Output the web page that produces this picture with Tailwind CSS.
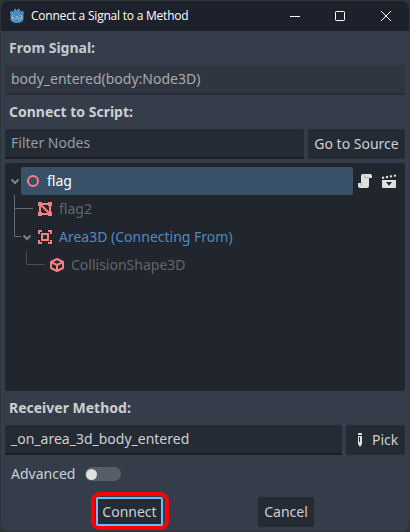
<!DOCTYPE html>
<html lang="en">
<head>
<meta charset="utf-8">
<title>Connect a Signal to a Method</title>
<script src="https://cdn.jsdelivr.net/npm/@tailwindcss/browser@4"></script>
</head>
<body class="w-[410px] h-[532px] overflow-hidden bg-[#303438] p-px font-['Noto_Sans',sans-serif] text-[14px] leading-[20px] text-[#cdcfd2]">
<div class="flex h-[530px] w-[408px] flex-col overflow-hidden rounded-[7px] bg-[#363d4a]">
  <header class="flex h-[30px] shrink-0 items-center bg-[#1d212b] pl-[8px] text-white">
    <svg class="h-4 w-4 shrink-0" viewBox="0 0 16 16"><path fill="#478cbf" d="M.8 4.500 2.700 2.600 4 3.400 5 3V1.200L6.800.6 7.500 2.200h1L9.200.6 11 1.200V3l1 .4 1.300-.8 1.900 1.900-.7 1.500V11c0 2.600-3.100 4-6.500 4s-6.500-1.400-6.500-4V6z"/><path fill="none" stroke="#8fbbdc" stroke-width=".7" d="M1.800 10.200 4 10.500 4.300 12h2l.4-1.200h2.600l.4 1.200h2l.3-1.500 2.200-.3"/><circle cx="4.500" cy="8.300" r="1.600" fill="#dbe3ea"/><circle cx="11.500" cy="8.300" r="1.600" fill="#dbe3ea"/><circle cx="4.700" cy="8.300" r="1" fill="#414042"/><circle cx="11.300" cy="8.300" r="1" fill="#414042"/><path stroke="#dbe3ea" d="M8 8v1.500"/></svg>
    <h1 class="ml-[6px] whitespace-nowrap font-['Open_Sans',sans-serif] text-[12px] tracking-[-0.22px]">Connect a Signal to a Method</h1>
    <div class="ml-auto flex shrink-0 items-center pr-[17px]">
      <svg class="h-3 w-3" viewBox="0 0 12 12" stroke="#fff"><path d="M1 6.500h10"/></svg>
      <svg class="ml-[33px] h-3 w-3" viewBox="0 0 12 12" fill="none" stroke="#fff"><rect x="1.500" y="1.500" width="9" height="9" rx=".8"/></svg>
      <svg class="ml-[34px] h-3 w-3" viewBox="0 0 12 12" stroke="#fff"><path d="m1 1 10 10M11 1 1 11"/></svg>
    </div>
  </header>
  <main class="flex flex-1 flex-col px-1">
    <h2 class="flex h-[34px] items-center pl-1 font-bold text-[#c6c9cd]">From Signal:</h2>
    <div class="h-[30px] rounded-t-[2px] border-b-2 border-[#272c36] bg-[#303641] px-[6px] pt-[4px] text-[#a6a9ae]">body_entered(body:Node3D)</div>
    <h2 class="flex h-[34px] items-center pl-1 font-bold">Connect to Script:</h2>
    <div class="flex h-[30px] gap-1">
      <div class="w-[299px] rounded-t-[2px] border-b-2 border-[#1b1f26] bg-[#252b34] px-[6px] pt-[4px] text-[#989b9f]">Filter Nodes</div>
      <button class="flex w-[97px] items-center justify-center rounded-[2px] bg-[#252b34] whitespace-nowrap">Go to Source</button>
    </div>
    <div class="mt-1 h-[228px] rounded-[2px] bg-[#21252e] pt-1">
      <div class="flex h-7 items-center">
        <svg class="h-4 w-4" viewBox="0 0 16 16" fill="none" stroke="#7f8287" stroke-width="2"><path d="m6.500 6.500 3.500 3.500 3.500-3.500"/></svg>
        <div class="flex h-7 w-[332px] items-center rounded-[2px] bg-[#395069] pl-1 text-white">
          <svg class="h-4 w-4" viewBox="0 0 16 16" fill="none" stroke="#fc7f7f" stroke-width="2"><circle cx="8" cy="8" r="5"/></svg>
          <span class="ml-[6px]">flag</span>
        </div>
        <svg class="ml-1 h-4 w-4" viewBox="0 0 16 16" fill="#e0e0e0"><path d="M6 1a2 2 0 0 0-2 2v7H1v3a2 2 0 0 0 2 2h7a2 2 0 0 0 2-2V5h3V3a2 2 0 0 0-2-2z"/><path fill="none" stroke="#9a9c9f" stroke-width=".8" d="M7.500 2v2.600H12M4.400 10v3"/></svg>
        <svg class="ml-2 h-4 w-4" viewBox="0 0 16 16"><path fill="none" stroke="#e0e0e0" stroke-width="2" stroke-dasharray="2.200 1.800" d="M1 4.900 15 2.500"/><path fill="#e0e0e0" d="M1 7h14v7a1 1 0 0 1-1 1H2a1 1 0 0 1-1-1z"/><path fill="#21252e" d="M5 9h6l-3 3.800z"/></svg>
      </div>
      <div class="flex h-7 items-center text-[#62666d]">
        <svg class="h-7 w-8" viewBox="0 0 32 28" fill="none" stroke="#666a70"><path d="M9.500 0v28M9.500 13.500H28"/></svg>
        <svg class="h-4 w-4" viewBox="0 0 16 16" fill="none" stroke="#fc7f7f" stroke-width="2"><path d="M3 3h10v10H3zM3 3l10 10"/><path fill="#fc7f7f" stroke="none" d="M1 1h4v4H1zM11 1h4v4h-4zM1 11h4v4H1zM11 11h4v4h-4z"/></svg>
        <span class="ml-[6px]">flag2</span>
      </div>
      <div class="flex h-7 items-center text-[#508bbd]">
        <svg class="h-7 w-8" viewBox="0 0 32 28" fill="none"><path stroke="#666a70" d="M9.500 0v13.500H16"/><path stroke="#7f8287" stroke-width="2" d="m18.500 12.500 3.500 3.500 3.500-3.500"/></svg>
        <svg class="h-4 w-4" viewBox="0 0 16 16" fill="none" stroke="#fc7f7f" stroke-width="2"><path d="M2 5V2h3M11 2h3v3M14 11v3h-3M5 14H2v-3M5 5h6v6H5z"/></svg>
        <span class="ml-[6px] whitespace-nowrap">Area3D (Connecting From)</span>
      </div>
      <div class="flex h-7 items-center text-[#62666d]">
        <svg class="h-7 w-11" viewBox="0 0 44 28" fill="none" stroke="#484c54"><path d="M21.500 0v13.500H40"/></svg>
        <svg class="h-4 w-4" viewBox="0 0 16 16" fill="none" stroke="#fc7f7f" stroke-width="2" stroke-linejoin="round"><path d="m8 2 6 3v6l-6 3-6-3V5zM2 5l6 3 6-3M8 8v6"/></svg>
        <span class="ml-[6px]">CollisionShape3D</span>
      </div>
    </div>
    <h2 class="flex h-[34px] items-center pl-1 font-bold">Receiver Method:</h2>
    <div class="flex h-[30px] gap-1">
      <div class="w-[337px] rounded-t-[2px] border-b-2 border-[#1b1f26] bg-[#252b34] px-[6px] pt-[4px]">_on_area_3d_body_entered</div>
      <button class="flex w-[59px] items-center rounded-[2px] bg-[#252b34] pl-[6px]">
        <svg class="h-4 w-4" viewBox="0 0 16 16" fill="#e0e0e0"><path d="M6 2a1 1 0 0 1 1-1h2a1 1 0 0 1 1 1v1H6zM6 4h4v8l-2 3-2-3z"/><path fill="#252b34" d="M7 5h1v5H7z"/></svg>
        <span class="ml-1">Pick</span>
      </button>
    </div>
    <div class="flex h-[38px] items-center pl-[6px]">
      <span class="w-[74px]">Advanced</span>
      <span class="flex h-[14px] w-9 items-center rounded-full bg-[#585e67] pl-[1px]"><span class="h-[11px] w-[11px] rounded-full bg-[#e0e0e0]"></span></span>
    </div>
    <div class="-mt-px flex items-start">
      <div class="ml-[86px] h-[38px] w-[78px] shrink-0 rounded-[9px] border-[4px] border-[#fe0000] pt-px pl-px">
        <button class="flex h-[29px] w-[67px] items-center justify-center rounded-[2px] border-2 border-[#70bafa] bg-[#252b34]">Connect</button>
      </div>
      <button class="mt-[5px] ml-[89px] flex h-[30px] w-[56px] items-center justify-center rounded-[2px] bg-[#252b34]">Cancel</button>
    </div>
  </main>
</div>
</body>
</html>
